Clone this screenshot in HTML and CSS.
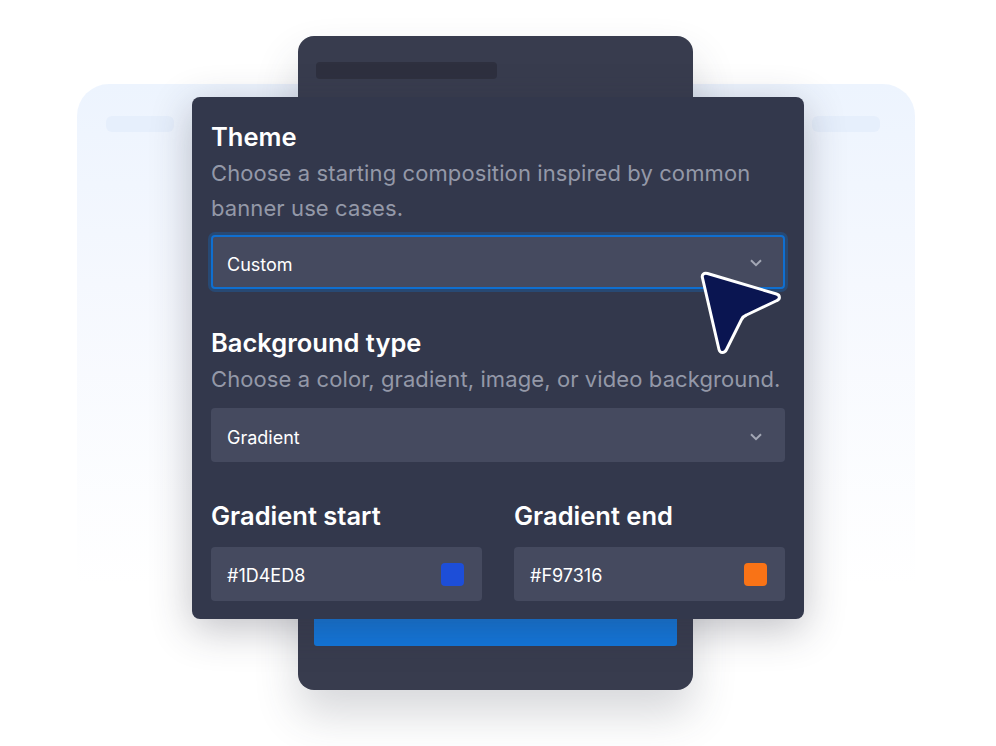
FILE: index.html
```html
<!DOCTYPE html>
<html lang="en">
<head>
<meta charset="utf-8">
<title>Banner settings</title>
<link rel="stylesheet" href="styles.css">
</head>
<body>
<div class="stage">
  <div class="win back">
    <span class="pill pill-l"></span>
    <span class="pill pill-r"></span>
  </div>
  <div class="win middle">
    <div class="dark-bar"></div>
    <div class="blue-bar"></div>
  </div>
  <form class="win panel">
    <h2>Theme</h2>
    <p>Choose a starting composition inspired by common banner use cases.</p>
    <div class="field focus">
      <span>Custom</span>
      <svg class="chev" viewBox="0 0 12 8"><path d="M1 1.2 6 6.2 11 1.2"/></svg>
    </div>
    <h2 class="gap">Background type</h2>
    <p class="nowrap">Choose a color, gradient, image, or video background.</p>
    <div class="field field-second">
      <span>Gradient</span>
      <svg class="chev" viewBox="0 0 12 8"><path d="M1 1.2 6 6.2 11 1.2"/></svg>
    </div>
    <div class="cols">
      <div class="col">
        <h2>Gradient start</h2>
        <div class="field">
          <span>#1D4ED8</span>
          <i class="swatch swatch-blue"></i>
        </div>
      </div>
      <div class="col">
        <h2>Gradient end</h2>
        <div class="field">
          <span>#F97316</span>
          <i class="swatch swatch-orange"></i>
        </div>
      </div>
    </div>
  </form>
  <svg class="cursor" viewBox="0 0 84 88">
    <path d="M4.500 7C3.500 3.500 6 1.500 9.500 2.500L78.500 23C82 24 82.500 28 79 29.500L48.500 44C46 45 44.500 46.500 43.500 48.500L28.500 78.500C26.500 82.500 22 82.500 21 78.500Z"/>
  </svg>
</div>
</body>
</html>
```
FILE: styles.css
```css
* { box-sizing: border-box; }
html, body { margin: 0; background: #fff; }
.stage {
  position: relative;
  width: 996px;
  height: 746px;
  overflow: hidden;
  font-family: Inter, "Noto Sans", sans-serif;
}
.win { position: absolute; }
.back {
  left: 77px;
  top: 84px;
  width: 838px;
  height: 500px;
  border-radius: 32px 32px 0 0;
  background: linear-gradient(180deg, #edf4fe 0%, #f5f8fe 40%, #ffffff 100%);
}
.pill {
  position: absolute;
  top: 32px;
  width: 68px;
  height: 16px;
  border-radius: 6px;
  background: #e6effc;
}
.pill-l { left: 29px; }
.pill-r { right: 35px; }
.middle {
  left: 298px;
  top: 36px;
  width: 395px;
  height: 654px;
  border-radius: 16px;
  background: #383c4e;
  box-shadow: 0 24px 44px rgba(55, 59, 77, 0.2);
  padding: 26px 16px 44px 18px;
  display: flex;
  flex-direction: column;
  justify-content: space-between;
}
.dark-bar {
  width: 181px;
  height: 17px;
  border-radius: 4px;
  background: #2e303f;
}
.blue-bar {
  width: 363px;
  height: 60px;
  margin-left: -2px;
  border-radius: 3px;
  background: #1277dc;
}
.panel {
  left: 192px;
  top: 97px;
  width: 612px;
  height: 522px;
  border-radius: 8px;
  background: #33384c;
  box-shadow: 0 10px 40px rgba(46, 48, 63, 0.3);
  padding: 19px 19px 18px;
  display: flex;
  flex-direction: column;
}
h2 {
  margin: 0;
  font-size: 25.5px;
  line-height: 41px;
  font-weight: 600;
  color: #fff;
}
p {
  margin: -1px 0 0;
  font-size: 22px;
  letter-spacing: 0.1px;
  line-height: 35px;
  color: #9498a8;
}
.nowrap { white-space: nowrap; }
.gap { margin-top: 33px; }
.field {
  flex: none;
  height: 54px;
  margin-top: 10px;
  padding: 4px 23px 0 16px;
  display: flex;
  align-items: center;
  justify-content: space-between;
  border-radius: 4px;
  background: #454a5f;
  color: #fff;
  font-size: 18px;
}
.field-second { margin-top: 11px; }
.focus {
  margin-top: 9px;
  border: 2px solid #0f6fd0;
  padding: 4px 21px 0 14px;
  box-shadow: 0 0 0 3px rgba(17, 112, 205, 0.3);
}
.focus .chev { margin-top: -2px; }
.chev {
  width: 12px;
  height: 8px;
  fill: none;
  stroke: #a3a7b5;
  stroke-width: 2;
}
.cols {
  display: flex;
  gap: 32px;
  margin-top: 33px;
}
.col { flex: 1; }
.col .field {
  margin-top: 11px;
  padding: 2px 17px 0 16px;
}
.swatch {
  width: 23px;
  height: 23px;
  margin-right: 1px;
  margin-top: -2px;
  border-radius: 4px;
}
.swatch-blue { background: #1d4ed8; }
.swatch-orange { background: #f97316; }
.cursor {
  position: absolute;
  left: 698px;
  top: 271px;
  width: 84px;
  height: 88px;
  fill: #0a1551;
  stroke: #fff;
  stroke-width: 3;
  stroke-linejoin: round;
}
```
